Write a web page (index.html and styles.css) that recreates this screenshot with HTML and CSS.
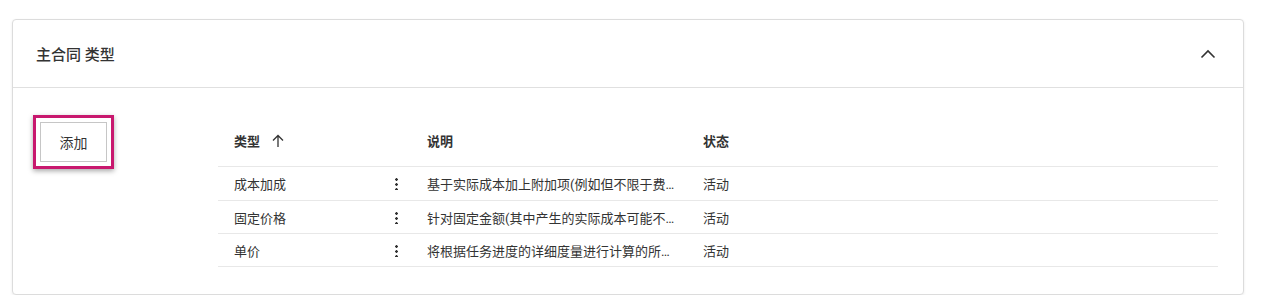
FILE: index.html
```html
<!DOCTYPE html>
<html lang="zh-CN">
<head>
    <meta charset="UTF-8">
    <meta name="viewport" content="width=device-width, initial-scale=1.0">
    <title>主合同 类型</title>
    <link rel="stylesheet" href="styles.css">
</head>
<body>

    <section class="card">
        <header class="card-header">
            <h2 class="card-title">主合同 类型</h2>
            <svg class="chevron" width="16" height="10" viewBox="0 0 16 10">
                <path d="M1.5 8.5 L8 2 L14.5 8.5" fill="none" stroke="#333" stroke-width="1.6"/>
            </svg>
        </header>

        <div class="card-body">
            <div class="focus-ring">
                <button class="add-btn">添加</button>
            </div>

            <div class="grid">
                <div class="row head">
                    <div class="cell type">类型
                        <svg class="sort" width="12" height="14" viewBox="0 0 12 14">
                            <path d="M6 13 V2 M1 6.5 L6 1.5 L11 6.5" fill="none" stroke="#333" stroke-width="1.3"/>
                        </svg>
                    </div>
                    <div class="cell dots"></div>
                    <div class="cell desc">说明</div>
                    <div class="cell status">状态</div>
                </div>

                <div class="row">
                    <div class="cell type">成本加成</div>
                    <div class="cell dots"><span class="kebab"></span></div>
                    <div class="cell desc">基于实际成本加上附加项(例如但不限于费…</div>
                    <div class="cell status">活动</div>
                </div>
                <div class="row">
                    <div class="cell type">固定价格</div>
                    <div class="cell dots"><span class="kebab"></span></div>
                    <div class="cell desc">针对固定金额(其中产生的实际成本可能不…</div>
                    <div class="cell status">活动</div>
                </div>
                <div class="row">
                    <div class="cell type">单价</div>
                    <div class="cell dots"><span class="kebab"></span></div>
                    <div class="cell desc">将根据任务进度的详细度量进行计算的所…</div>
                    <div class="cell status">活动</div>
                </div>
            </div>
        </div>
    </section>

</body>
</html>
```

FILE: styles.css
```css
/* General styles */
body {
    margin: 0;
    padding: 0;
    background: #fff;
    color: #333;
    font-family: "Roboto", "Noto Sans CJK SC", sans-serif;
}

/* Card */
.card {
    margin: 19px 17px 0 12px;
    border: 1px solid #dcdcdc;
    border-radius: 4px;
    box-shadow: 0 1px 3px rgba(0, 0, 0, 0.08);
    background: #fff;
}

.card-header {
    height: 67px;
    display: flex;
    align-items: center;
    justify-content: space-between;
    padding: 0 27px 0 23px;
    border-bottom: 1px solid #e0e0e0;
}

.card-title {
    margin: 0;
    font-size: 15px;
    font-weight: 500;
    color: #333;
}

.chevron {
    display: block;
}

.card-body {
    display: flex;
    align-items: flex-start;
    padding: 27px 25px 27px 20px;
}

/* Add button with focus ring */
.focus-ring {
    border: 3px solid #c8186e;
    padding: 4px;
    box-shadow: 0 2px 5px rgba(0, 0, 0, 0.35);
    flex: none;
}

.add-btn {
    display: block;
    width: 67px;
    height: 40px;
    padding: 0;
    border: 1px solid #c6c6c6;
    background: #fff;
    color: #333;
    font-family: inherit;
    font-size: 14px;
    cursor: pointer;
}

/* Table */
.grid {
    flex: 1;
    margin-left: 104px;
}

.row {
    display: grid;
    grid-template-columns: 163px 30px 276px 1fr;
    height: 32px;
    align-items: center;
    border-bottom: 1px solid #e8e8e8;
    font-size: 13px;
    color: #333;
}

.row.head {
    height: 51px;
    font-weight: 700;
}

.row:nth-child(2) {
    height: 33px;
}

.cell {
    padding: 0 16px;
    white-space: nowrap;
}

.cell.type {
    display: flex;
    align-items: center;
}

.sort {
    margin-left: 12px;
}

.cell.dots {
    padding: 0;
    display: flex;
    justify-content: center;
}

.cell.desc {
    padding-right: 8px;
}

.kebab {
    width: 3px;
    height: 13px;
    background: radial-gradient(circle, #333 1.2px, transparent 1.5px) 0 0 / 3px 5px repeat-y;
}
```
